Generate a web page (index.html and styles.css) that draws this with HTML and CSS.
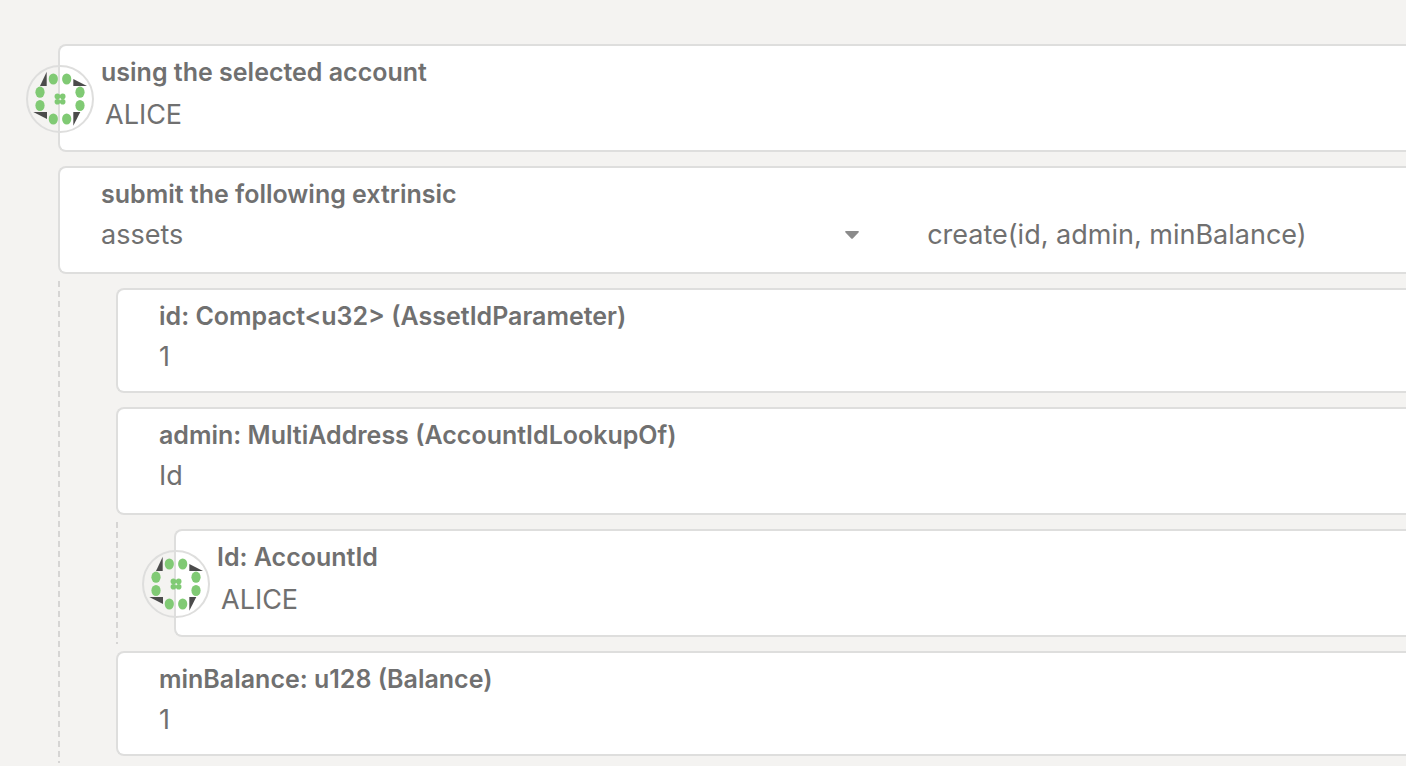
FILE: index.html
```html
<!DOCTYPE html>
<html lang="en">
<head>
<meta charset="utf-8">
<title>Extrinsics</title>
<link rel="stylesheet" href="styles.css">
</head>
<body>
<svg class="defs" aria-hidden="true">
  <symbol id="identicon" viewBox="0 0 68 68">
    <g fill="#4b4b4b">
      <path d="M20.7 6.7V21H14z"/>
      <path d="M47.3 14V21H61z"/>
      <path d="M47.3 47H54.3L47.3 60.7z"/>
      <path d="M7.3 47H21V54z"/>
    </g>
    <g fill="#80ca74">
      <ellipse cx="27.3" cy="14" rx="4.6" ry="5.6"/>
      <ellipse cx="40.7" cy="14" rx="4.6" ry="5.6"/>
      <ellipse cx="14" cy="27.2" rx="4.6" ry="5.6"/>
      <ellipse cx="14" cy="40.5" rx="4.6" ry="5.6"/>
      <ellipse cx="54" cy="27.2" rx="4.6" ry="5.6"/>
      <ellipse cx="54" cy="40.5" rx="4.6" ry="5.6"/>
      <ellipse cx="27.3" cy="54" rx="4.6" ry="5.6"/>
      <ellipse cx="40.7" cy="54" rx="4.6" ry="5.6"/>
      <circle cx="31.4" cy="31.4" r="2.8"/>
      <circle cx="36.7" cy="31.4" r="2.8"/>
      <circle cx="31.4" cy="36.7" r="2.8"/>
      <circle cx="36.7" cy="36.7" r="2.8"/>
    </g>
    <circle cx="34" cy="34" r="33" fill="none" stroke="#dededd" stroke-width="2"/>
  </symbol>
</svg>
<form class="extrinsic">
  <div class="card account">
    <svg class="avatar" aria-hidden="true"><use href="#identicon"/></svg>
    <label class="label" for="sender">using the selected account</label>
    <input class="value" id="sender" type="text" value="ALICE">
  </div>
  <div class="card">
    <label class="label" for="section">submit the following extrinsic</label>
    <div class="columns">
      <div class="dropdown">
        <select class="value" id="section"><option>assets</option></select>
        <svg class="caret" viewBox="0 0 14 8" aria-hidden="true"><path d="M1 0H13Q14.500 .5 13.500 1.500L8 7.300Q7 8.300 6 7.300L.5 1.500Q-.5 .5 1 0z" fill="#8b8b8b"/></svg>
      </div>
      <select class="value" id="method" aria-label="method"><option>create(id, admin, minBalance)</option></select>
    </div>
  </div>
  <div class="params">
    <div class="card short">
      <label class="label" for="asset-id">id: Compact&lt;u32&gt; (AssetIdParameter)</label>
      <input class="value" id="asset-id" type="text" value="1">
    </div>
    <div class="card">
      <label class="label" for="admin">admin: MultiAddress (AccountIdLookupOf)</label>
      <select class="value" id="admin"><option>Id</option></select>
    </div>
    <div class="params">
      <div class="card account">
        <svg class="avatar" aria-hidden="true"><use href="#identicon"/></svg>
        <label class="label" for="admin-id">Id: AccountId</label>
        <input class="value" id="admin-id" type="text" value="ALICE">
      </div>
    </div>
    <div class="card short">
      <label class="label" for="min-balance">minBalance: u128 (Balance)</label>
      <input class="value" id="min-balance" type="text" value="1">
    </div>
  </div>
</form>
</body>
</html>
```
FILE: styles.css
```css
* {
  box-sizing: border-box;
}

body {
  margin: 0;
  background: #f4f3f1;
  color: #707070;
  font-family: Inter, "Liberation Sans", sans-serif;
}

.defs {
  position: absolute;
  width: 0;
  height: 0;
}

.extrinsic {
  padding: 44px 0 0 58px;
}

.card {
  position: relative;
  margin-bottom: 14px;
  padding: 11px 0 20px 41px;
  border: 2px solid #dededd;
  border-right: 0;
  border-radius: 8px 0 0 8px;
  background: #fff;
}

.short {
  padding-bottom: 17px;
}

.label {
  display: block;
  margin-bottom: 9px;
  font-size: 25px;
  font-weight: 600;
  line-height: 30px;
  white-space: nowrap;
}

.value {
  display: block;
  width: 100%;
  height: 34px;
  margin: 0;
  padding: 0;
  border: 0;
  outline: 0;
  appearance: none;
  background: transparent;
  color: inherit;
  font-family: inherit;
  font-size: 27px;
  line-height: 34px;
}

.account {
  padding-bottom: 18px;
}

.account .label {
  margin-bottom: 11px;
}

.account .value {
  padding-left: 4px;
}

.avatar {
  position: absolute;
  top: 19px;
  left: -34px;
  width: 68px;
  height: 68px;
}

.columns {
  display: grid;
  grid-template-columns: 8fr 5fr;
  gap: 60px;
}

.dropdown {
  position: relative;
}

.caret {
  position: absolute;
  top: 13px;
  right: 8px;
  width: 14px;
  height: 8px;
  pointer-events: none;
}

.params {
  position: relative;
  padding-left: 58px;
}

.params::before {
  content: "";
  position: absolute;
  top: -7px;
  bottom: -7px;
  left: 0;
  width: 2px;
  background: repeating-linear-gradient(#d6d5d4 0 6px, transparent 6px 10px);
}
```
